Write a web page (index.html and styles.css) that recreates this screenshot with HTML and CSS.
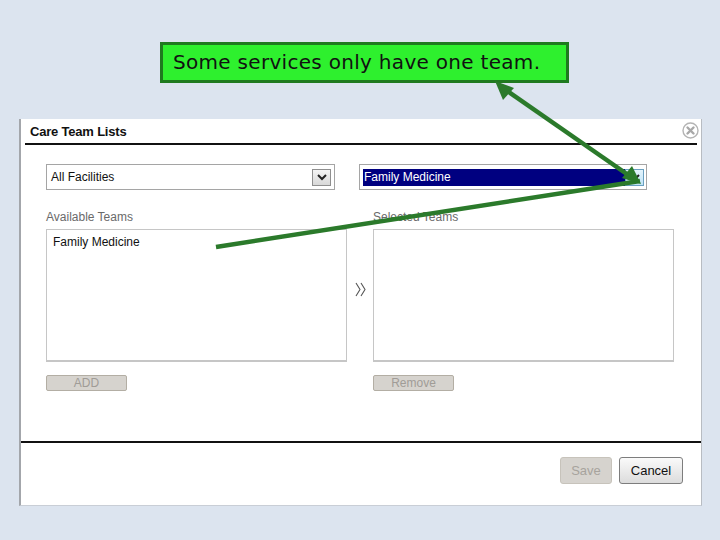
FILE: index.html
```html
<!DOCTYPE html>
<html>
<head>
<meta charset="utf-8">
<link rel="stylesheet" href="styles.css">
</head>
<body>
<div class="page">
  <div class="dialog">
    <div class="dlg-head">
      <span class="dlg-title">Care Team Lists</span>
      <span class="close-btn">
        <svg width="17" height="17" viewBox="0 0 17 17"><circle cx="8.5" cy="8.5" r="7.5" fill="#fff" stroke="#b4b4b4" stroke-width="1.4"/><path d="M5.5 5.5 L11.5 11.5 M11.5 5.5 L5.5 11.5" stroke="#a8a8a8" stroke-width="2.4" stroke-linecap="round"/></svg>
      </span>
    </div>
    <div class="dlg-body">
      <div class="selects">
        <div class="select sel-left">
          <span class="sel-text">All Facilities</span>
          <span class="sel-btn"><svg width="10" height="7" viewBox="0 0 10 7"><path d="M1 1 L5 5 L9 1" fill="none" stroke="#222" stroke-width="2"/></svg></span>
        </div>
        <div class="select sel-right">
          <span class="sel-text hl">Family Medicine</span>
          <span class="sel-btn hot"><svg width="10" height="7" viewBox="0 0 10 7"><path d="M1 1 L5 5 L9 1" fill="none" stroke="#222" stroke-width="2"/></svg></span>
        </div>
      </div>
      <div class="lists">
        <div class="col">
          <div class="lbl">Available Teams</div>
          <div class="listbox"><div class="item">Family Medicine</div></div>
          <div class="btn-small">ADD</div>
        </div>
        <div class="mid">
          <svg width="12" height="15" viewBox="0 0 12 15"><path d="M1 1 L5 7.5 L1 14 M6 1 L10 7.5 L6 14" fill="none" stroke="#555" stroke-width="1.1"/></svg>
        </div>
        <div class="col">
          <div class="lbl">Selected Teams</div>
          <div class="listbox"></div>
          <div class="btn-small">Remove</div>
        </div>
      </div>
    </div>
    <div class="dlg-foot">
      <span class="btn save">Save</span>
      <span class="btn cancel">Cancel</span>
    </div>
  </div>

  <div class="callout">Some services only have one team.</div>

  <svg class="arrows" width="720" height="540" viewBox="0 0 720 540">
    <g stroke="#2b7a2b" stroke-width="4.5" fill="#2b7a2b" stroke-linecap="butt">
      <line x1="503" y1="88" x2="634" y2="179"/>
      <line x1="640" y1="181" x2="216" y2="247"/>
    </g>
    <polygon points="495,81 514,88 503,100" fill="#2b7a2b"/>
    <polygon points="641,184 622,178 632,166" fill="#2b7a2b"/>
  </svg>
</div>
</body>
</html>
```
FILE: styles.css
```css
html, body {
  margin: 0;
  padding: 0;
}
body {
  background: #dce4ef;
  font-family: "Liberation Sans", Arial, sans-serif;
}
.page {
  position: relative;
  width: 720px;
  height: 540px;
  padding-top: 119px;
  box-sizing: border-box;
  overflow: hidden;
}
.dialog {
  margin-left: 19px;
  width: 683px;
  height: 387px;
  background: #fff;
  box-sizing: border-box;
  border-left: 2px solid #a3a6ab;
  border-right: 1px solid #b8bcc2;
  border-bottom: 1px solid #c9ced6;
  display: flex;
  flex-direction: column;
}
.dlg-head {
  height: 26px;
  margin: 0 4px 0 4px;
  border-bottom: 2px solid #111;
  display: flex;
  align-items: center;
  justify-content: space-between;
  box-sizing: border-box;
}
.dlg-title {
  font-size: 13px;
  font-weight: bold;
  color: #111;
  padding-left: 5px;
  letter-spacing: -0.2px;
}
.close-btn {
  display: flex;
  margin-top: -1px;
  margin-right: -2px;
}
.dlg-body {
  height: 296px;
  padding: 19px 0 0 25px;
  box-sizing: border-box;
}
.selects {
  display: flex;
  gap: 24px;
}
.select {
  height: 26px;
  border: 1px solid #a5a5a5;
  box-sizing: border-box;
  display: flex;
  align-items: center;
  padding: 1px 2px 0 3px;
  font-size: 12px;
  color: #111;
}
.sel-left { width: 289px; }
.sel-right { width: 288px; }
.sel-text {
  flex: 1;
  height: 17px;
  line-height: 17px;
  padding-left: 1px;
}
.sel-text.hl {
  background: #000080;
  color: #fff;
}
.sel-btn {
  width: 19px;
  height: 17px;
  box-sizing: border-box;
  border: 1px solid #8f8f8f;
  background: linear-gradient(#f4f4f4, #d8d8d8);
  display: flex;
  align-items: center;
  justify-content: center;
}
.sel-left .sel-btn { margin-right: 1px; }
.sel-btn.hot {
  background: linear-gradient(#e4f4fc, #bfe3f6);
  border-color: #6aa0c0;
}
.lists {
  display: flex;
  margin-top: 19px;
}
.col {
  width: 301px;
  display: flex;
  flex-direction: column;
}
.lbl {
  font-size: 12px;
  color: #6a6a6a;
  height: 20px;
  line-height: 16px;
}
.listbox {
  height: 133px;
  border: 1px solid #c6c6c6;
  border-bottom: 2px solid #c6c6c6;
  box-sizing: border-box;
  padding: 5px 6px;
}
.item {
  font-size: 12px;
  color: #111;
}
.mid {
  width: 26px;
  display: flex;
  justify-content: center;
  padding: 73px 0 0 2px;
  box-sizing: border-box;
}
.mid svg { display: block; }
.btn-small {
  margin-top: 13px;
  width: 81px;
  height: 16px;
  box-sizing: border-box;
  border: 1px solid #b3aea4;
  border-radius: 2px;
  background: #d6d3ce;
  color: #a09c97;
  font-size: 12px;
  line-height: 14px;
  text-align: center;
}
.dlg-foot {
  flex: 1;
  border-top: 2px solid #111;
  display: flex;
  justify-content: flex-end;
  align-items: flex-start;
  gap: 7px;
  padding: 14px 18px 0 0;
}
.btn {
  height: 27px;
  box-sizing: border-box;
  border-radius: 3px;
  font-size: 13px;
  line-height: 25px;
  text-align: center;
}
.save {
  width: 52px;
  border: 1px solid #c7c3bb;
  background: #d6d3ce;
  color: #a7a39d;
}
.cancel {
  width: 64px;
  border: 1px solid #7d7d7d;
  background: linear-gradient(#fafafa, #dcdcdc);
  color: #111;
}
.callout {
  position: absolute;
  left: 160px;
  top: 42px;
  width: 409px;
  height: 41px;
  box-sizing: border-box;
  border: 3px solid #1f7a1f;
  background: #2ef02e;
  font-family: "DejaVu Sans", sans-serif;
  font-size: 20px;
  line-height: 34px;
  padding-left: 10px;
  color: #111;
  letter-spacing: 0.3px;
}
.arrows {
  position: absolute;
  left: 0;
  top: 0;
  pointer-events: none;
}
```
